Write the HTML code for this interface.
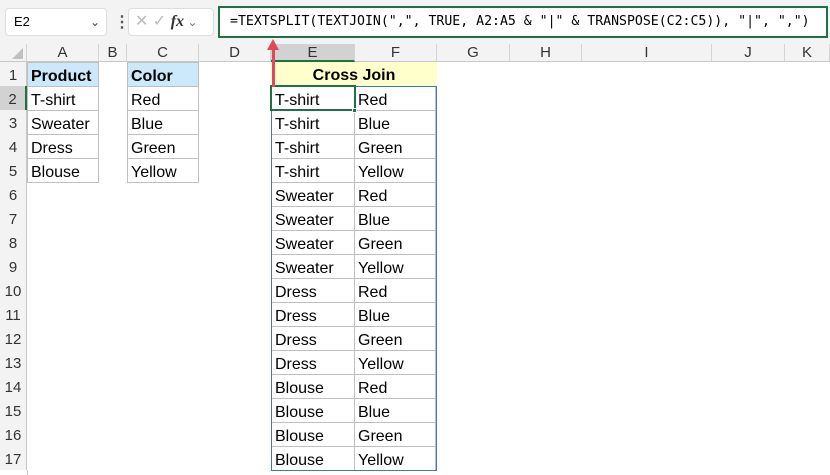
<!DOCTYPE html>
<html><head><meta charset="utf-8"><style>
*{margin:0;padding:0;box-sizing:border-box}
body{width:830px;height:475px;overflow:hidden;background:#fff;font-family:"Liberation Sans",Arial,sans-serif;position:relative}
.a{position:absolute}
.top{left:0;top:0;width:830px;height:44px;background:#f3f3f3}
.ch{top:44px;height:18px;background:#f3f3f3;border-bottom:1px solid #c8c8c8;border-right:1px solid #d4d4d4;font-size:15px;color:#333;text-align:center;line-height:18px}
.rh{left:0;width:27px;height:24px;background:#f3f3f3;font-size:15px;color:#333;text-align:center;line-height:28px;border-right:1px solid #c8c8c8}
.c{height:25px;border:1px solid #bfbfbf;margin:-1px 0 0 -1px;font-size:16px;line-height:27px;padding-left:3px;color:#000;white-space:nowrap;overflow:hidden}
.b{font-weight:bold}
.hb{background:#cce8fb}
</style></head><body>
<div class="a top"></div>
<div class="a" style="left:5px;top:8px;width:102px;height:28px;background:#fff;border:1px solid #ddd;border-radius:4px;font-size:13px;line-height:26px;padding-left:8px">E2<span class="a" style="left:84px;top:0;font-size:12px;color:#444">&#8964;</span></div>
<div class="a" style="left:114px;top:12px;font-size:16px;color:#555;font-weight:bold">&#8942;</div>
<div class="a" style="left:128px;top:8px;width:86px;height:28px;background:#fff;border:1px solid #ddd;border-radius:4px;font-size:16px;line-height:26px;color:#bbb;padding-left:6px">&#10005; &#10003; <i style="color:#333;font-family:'Liberation Serif',serif;font-weight:bold">fx</i><span style="color:#777;font-size:12px"> &#8964;</span></div>
<div class="a" style="left:218px;top:6px;width:610px;height:32px;background:#fff;border:2px solid #1e7145;font-family:'DejaVu Sans Mono','Liberation Mono',monospace;font-size:13.2px;line-height:28px;padding-left:10px;white-space:nowrap">=TEXTSPLIT(TEXTJOIN(",", TRUE, A2:A5 &amp; "|" &amp; TRANSPOSE(C2:C5)), "|", ",")</div>
<div class="a ch" style="left:0;width:27px"></div>
<div class="a" style="left:12px;top:48px;width:0;height:0;border-left:11px solid transparent;border-bottom:11px solid #c0c0c0"></div>
<div class="a ch" style="left:27px;width:72px">A</div>
<div class="a ch" style="left:99px;width:28px">B</div>
<div class="a ch" style="left:127px;width:72px">C</div>
<div class="a ch" style="left:199px;width:72px">D</div>
<div class="a ch" style="left:271px;width:84px;background:#d2d2d2;border-bottom:2px solid #1e7145">E</div>
<div class="a ch" style="left:355px;width:82px">F</div>
<div class="a ch" style="left:437px;width:73px">G</div>
<div class="a ch" style="left:510px;width:72px">H</div>
<div class="a ch" style="left:582px;width:130px">I</div>
<div class="a ch" style="left:712px;width:73px">J</div>
<div class="a ch" style="left:785px;width:45px">K</div>

<div class="a rh" style="top:62px">1</div>
<div class="a rh" style="top:86px;background:#d2d2d2;border-right:2px solid #1e7145">2</div>
<div class="a rh" style="top:110px">3</div>
<div class="a rh" style="top:134px">4</div>
<div class="a rh" style="top:158px">5</div>
<div class="a rh" style="top:182px">6</div>
<div class="a rh" style="top:206px">7</div>
<div class="a rh" style="top:230px">8</div>
<div class="a rh" style="top:254px">9</div>
<div class="a rh" style="top:278px">10</div>
<div class="a rh" style="top:302px">11</div>
<div class="a rh" style="top:326px">12</div>
<div class="a rh" style="top:350px">13</div>
<div class="a rh" style="top:374px">14</div>
<div class="a rh" style="top:398px">15</div>
<div class="a rh" style="top:422px">16</div>
<div class="a rh" style="top:446px">17</div>
<div class="a" style="left:27px;top:470px;width:1px;height:5px;background:#c8c8c8"></div>

<div class="a" style="left:28px;top:63px">
<div class="c b hb" style="width:72px">Product</div>
<div class="c" style="width:72px">T-shirt</div>
<div class="c" style="width:72px">Sweater</div>
<div class="c" style="width:72px">Dress</div>
<div class="c" style="width:72px">Blouse</div>
</div>
<div class="a" style="left:128px;top:63px">
<div class="c b hb" style="width:72px">Color</div>
<div class="c" style="width:72px">Red</div>
<div class="c" style="width:72px">Blue</div>
<div class="c" style="width:72px">Green</div>
<div class="c" style="width:72px">Yellow</div>
</div>
<div class="a b" style="left:271px;top:62px;width:166px;height:24px;background:#ffffcc;font-size:16px;text-align:center;line-height:28px">Cross Join</div>
<div class="a" style="left:272px;top:87px">
<div class="c" style="width:84px">T-shirt</div><div class="c" style="width:84px">T-shirt</div><div class="c" style="width:84px">T-shirt</div><div class="c" style="width:84px">T-shirt</div>
<div class="c" style="width:84px">Sweater</div><div class="c" style="width:84px">Sweater</div><div class="c" style="width:84px">Sweater</div><div class="c" style="width:84px">Sweater</div>
<div class="c" style="width:84px">Dress</div><div class="c" style="width:84px">Dress</div><div class="c" style="width:84px">Dress</div><div class="c" style="width:84px">Dress</div>
<div class="c" style="width:84px">Blouse</div><div class="c" style="width:84px">Blouse</div><div class="c" style="width:84px">Blouse</div><div class="c" style="width:84px">Blouse</div>
</div>
<div class="a" style="left:355px;top:87px">
<div class="c" style="width:82px">Red</div><div class="c" style="width:82px">Blue</div><div class="c" style="width:82px">Green</div><div class="c" style="width:82px">Yellow</div>
<div class="c" style="width:82px">Red</div><div class="c" style="width:82px">Blue</div><div class="c" style="width:82px">Green</div><div class="c" style="width:82px">Yellow</div>
<div class="c" style="width:82px">Red</div><div class="c" style="width:82px">Blue</div><div class="c" style="width:82px">Green</div><div class="c" style="width:82px">Yellow</div>
<div class="c" style="width:82px">Red</div><div class="c" style="width:82px">Blue</div><div class="c" style="width:82px">Green</div><div class="c" style="width:82px">Yellow</div>
</div>
<div class="a" style="left:271px;top:86px;width:166px;height:385px;border:1px solid #4472c4"></div>
<div class="a" style="left:270px;top:85px;width:86px;height:26px;border:2px solid #1e7145"></div>
<div class="a" style="left:352px;top:108px;width:5px;height:5px;background:#1e7145;border:1px solid #fff"></div>
<div class="a" style="left:272px;top:48px;width:3px;height:39px;background:#e0495a"></div>
<div class="a" style="left:267px;top:39px;width:0;height:0;border-left:6.5px solid transparent;border-right:6.5px solid transparent;border-bottom:11px solid #e0495a"></div>
</body></html>
